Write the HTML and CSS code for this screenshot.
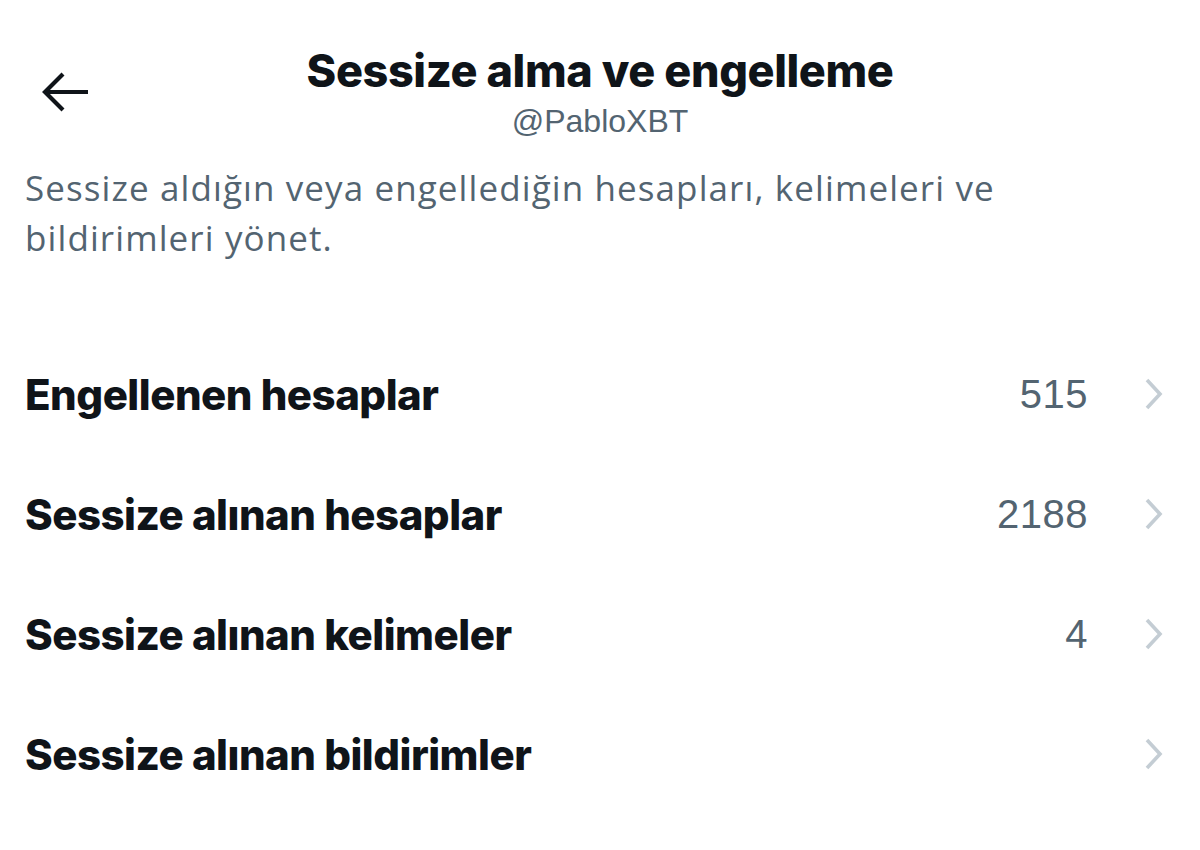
FILE: index.html
```html
<!DOCTYPE html>
<html lang="tr">
<head>
<meta charset="utf-8">
<title>Sessize alma ve engelleme</title>
<link rel="stylesheet" href="styles.css">
</head>
<body>
<div class="page">
  <header class="header">
    <div class="back">
      <svg class="back-icon" viewBox="0 0 48 42" width="48" height="42" aria-hidden="true">
        <path d="M3 21 H46 M21 3 L3 21 L21 39" fill="none" stroke="#0f1419" stroke-width="4.2" stroke-linecap="butt" stroke-linejoin="miter"/>
      </svg>
    </div>
    <div class="titles">
      <h1 class="title">Sessize alma ve engelleme</h1>
      <div class="handle">@PabloXBT</div>
    </div>
    <div class="spacer"></div>
  </header>
  <p class="desc">Sessize aldığın veya engellediğin hesapları, kelimeleri ve bildirimleri yönet.</p>
  <ul class="list">
    <li class="row"><span class="label">Engellenen hesaplar</span><span class="count">515</span><svg class="chev" viewBox="0 0 20 32" width="20" height="32" aria-hidden="true"><path d="M3 2 L16 16 L3 30" fill="none" stroke="#c4cdd4" stroke-width="3.6"/></svg></li>
    <li class="row"><span class="label">Sessize alınan hesaplar</span><span class="count">2188</span><svg class="chev" viewBox="0 0 20 32" width="20" height="32" aria-hidden="true"><path d="M3 2 L16 16 L3 30" fill="none" stroke="#c4cdd4" stroke-width="3.6"/></svg></li>
    <li class="row"><span class="label">Sessize alınan kelimeler</span><span class="count">4</span><svg class="chev" viewBox="0 0 20 32" width="20" height="32" aria-hidden="true"><path d="M3 2 L16 16 L3 30" fill="none" stroke="#c4cdd4" stroke-width="3.6"/></svg></li>
    <li class="row"><span class="label">Sessize alınan bildirimler</span><span class="count"></span><svg class="chev" viewBox="0 0 20 32" width="20" height="32" aria-hidden="true"><path d="M3 2 L16 16 L3 30" fill="none" stroke="#c4cdd4" stroke-width="3.6"/></svg></li>
  </ul>
</div>
</body>
</html>
```

FILE: styles.css
```css
html, body {
  margin: 0;
  padding: 0;
  background: #ffffff;
}
body {
  width: 1200px;
  height: 850px;
  overflow: hidden;
  font-family: Inter, "Liberation Sans", sans-serif;
  color: #0f1419;
}
.page {
  display: flex;
  flex-direction: column;
}
.header {
  display: grid;
  grid-template-columns: 1fr auto 1fr;
  align-items: start;
  padding-top: 46px;
}
.back {
  padding-left: 42px;
  padding-top: 25px;
}
.back-icon {
  display: block;
}
.titles {
  display: flex;
  flex-direction: column;
  align-items: center;
}
.title {
  margin: 0;
  font-size: 45px;
  font-weight: 800;
  line-height: 50px;
  letter-spacing: -0.4px;
}
.handle {
  margin-top: 10px;
  font-family: "Liberation Sans", Arial, sans-serif;
  font-size: 32px;
  line-height: 30px;
  color: #536471;
}
.desc {
  margin: 27px 0 0;
  padding: 0 25px;
  max-width: 1010px;
  font-family: "Open Sans", "Liberation Sans", sans-serif;
  font-size: 35px;
  line-height: 50px;
  letter-spacing: 1.1px;
  color: #536471;
}
.list {
  list-style: none;
  margin: 71px 0 0;
  padding: 0;
}
.row {
  display: flex;
  align-items: center;
  height: 120px;
  padding: 0 36px 0 25px;
}
.label {
  flex: 1;
  font-size: 42px;
  font-weight: 800;
  letter-spacing: -0.5px;
}
.count {
  font-family: "Liberation Sans", Arial, sans-serif;
  font-size: 40px;
  letter-spacing: 0.5px;
  color: #536471;
  margin-right: 56px;
}
.chev {
  display: block;
}
```
